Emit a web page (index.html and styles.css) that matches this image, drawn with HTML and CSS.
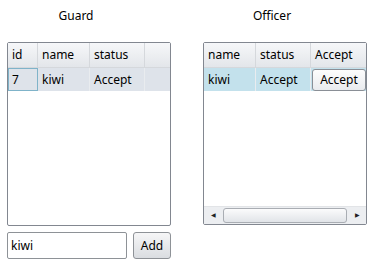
FILE: index.html
```html
<!DOCTYPE html>
<html>
<head>
    <title>Guard / Officer</title>
    <link rel="stylesheet" href="styles.css">
</head>
<body>
    <div class="panel">
        <div class="title">Guard</div>
        <div class="grid guard">
            <div class="row head">
                <div class="cell c-id">id</div>
                <div class="cell c-name">name</div>
                <div class="cell c-status">status</div>
                <div class="cell c-fill"></div>
            </div>
            <div class="row data">
                <div class="cell c-id current">7</div>
                <div class="cell c-name">kiwi</div>
                <div class="cell c-status">Accept</div>
                <div class="cell c-fill"></div>
            </div>
        </div>
        <div class="entry">
            <input type="text" value="kiwi">
            <button type="button">Add</button>
        </div>
    </div>

    <div class="panel">
        <div class="title">Officer</div>
        <div class="grid officer">
            <div class="rows">
                <div class="row head">
                    <div class="cell o-name">name</div>
                    <div class="cell o-status">status</div>
                    <div class="cell o-accept">Accept</div>
                </div>
                <div class="row data selected">
                    <div class="cell o-name">kiwi</div>
                    <div class="cell o-status">Accept</div>
                    <div class="cell o-accept"><button type="button" class="cell-btn">Accept</button></div>
                </div>
            </div>
            <div class="hscroll">
                <div class="arrow">&#9664;</div>
                <div class="track"><div class="thumb"></div></div>
                <div class="arrow">&#9654;</div>
            </div>
        </div>
    </div>
</body>
</html>
```

FILE: styles.css
```css
body { margin: 0; padding: 0 0 0 7px; background: #ffffff; font-family: "Noto Sans", "Open Sans", sans-serif; font-size: 12px; color: #000; display: flex; gap: 32px; }
.panel { width: 164px; display: flex; flex-direction: column; }
.title { height: 42px; line-height: 32px; text-align: center; padding-right: 26px; }

.grid { border: 1px solid #828790; border-radius: 2px; background: #fff; display: flex; flex-direction: column; }
.grid.guard { height: 182px; }
.grid.officer { height: 181px; justify-content: space-between; }

.row { display: flex; }
.head { height: 24px; background: linear-gradient(#f6f7f9, #e3e6ea); border-bottom: 1px solid #d5d8dc; }
.data { height: 23px; background: #dee3ea; }
.data.selected { background: #c3e1ec; }
.cell { box-sizing: border-box; padding: 0 4px; line-height: 23px; border-right: 1px solid #d5d8dc; white-space: nowrap; overflow: hidden; }
.head .cell { line-height: 24px; }
.data .cell { border-right-color: #e9ecef; }

.c-id { width: 30px; }
.c-name { width: 52px; }
.c-status { width: 55px; }
.c-fill { flex: 1; border-right: none; }
.data .current { border: 1px solid #7fb3c9; line-height: 21px; padding-left: 3px; }

.o-name { width: 52px; }
.o-status { width: 55px; }
.o-accept { flex: 1; border-right: none; }
.data .o-accept { padding: 1px 0 0 1px; }
.cell-btn { display: block; width: 100%; height: 22px; box-sizing: border-box; font: inherit; line-height: 18px; padding: 0; border: 1px solid #8a8f96; border-radius: 3px; background: linear-gradient(#fdfdfd, #e9ebee); }

.hscroll { display: flex; height: 17px; background: #eceef1; border-top: 1px solid #e2e4e7; }
.arrow { width: 18px; font-size: 6px; line-height: 17px; text-align: center; color: #222; }
.track { flex: 1; padding: 1px 1px; }
.thumb { height: 15px; box-sizing: border-box; border: 1px solid #a9adb3; border-radius: 3px; background: linear-gradient(#fbfbfc, #e1e4e8); }

.entry { display: flex; gap: 6px; margin-top: 6px; }
.entry input { width: 120px; height: 27px; box-sizing: border-box; border: 1px solid #8e9297; border-radius: 2px; padding: 0 3px; font: inherit; }
.entry button { width: 38px; height: 27px; font: inherit; padding: 0; border: 1px solid #8e9297; border-radius: 3px; background: linear-gradient(#f6f6f7, #dadde1); }
```
